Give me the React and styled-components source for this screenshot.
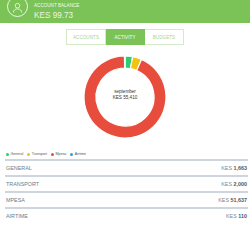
import React from "react";
import styled, { createGlobalStyle } from "styled-components";

const GlobalStyle = createGlobalStyle`
  html, body {
    margin: 0;
    padding: 0;
    background: #fff;
    font-family: "Liberation Sans", Arial, sans-serif;
  }
`;

const Page = styled.div`
  width: 250px;
  height: 250px;
  overflow: hidden;
  background: #fff;
`;

const Header = styled.div`
  height: 23px;
  background: #7bc257;
  display: flex;
  align-items: flex-start;
  padding-left: 7px;
  overflow: hidden;
`;

const Avatar = styled.div`
  width: 19px;
  height: 19px;
  border: 1px solid rgba(255, 255, 255, 0.85);
  border-radius: 50%;
  margin-top: -4px;
  display: flex;
  align-items: center;
  justify-content: center;
  svg {
    margin-top: 2px;
  }
`;

const Balance = styled.div`
  margin-left: 6px;
  display: flex;
  flex-direction: column;
  color: #fff;
`;

const BalanceLabel = styled.span`
  font-size: 4.6px;
  margin-top: 3px;
  color: #f3f9ef;
`;

const BalanceValue = styled.span`
  font-size: 8.2px;
  margin-top: 3px;
  color: #eaf5e4;
`;

const Tabs = styled.div`
  display: flex;
  justify-content: center;
  margin-top: 6px;
`;

const Tab = styled.div`
  width: 38px;
  height: 14px;
  display: flex;
  align-items: center;
  justify-content: center;
  font-size: 4.5px;
  letter-spacing: 0.1px;
  border: 1px solid ${(p) => (p.active ? "#7bc257" : "#d3ebc6")};
  background: ${(p) => (p.active ? "#7bc257" : "#fff")};
  color: ${(p) => (p.active ? "#fff" : "#a9d393")};
  & + & {
    border-left: none;
  }
`;

const ChartWrap = styled.div`
  position: relative;
  height: 95px;
  margin-top: 5px;
`;

const CenterLabel = styled.div`
  position: absolute;
  left: 0;
  right: 0;
  top: 39px;
  text-align: center;
  font-size: 4.6px;
  line-height: 5.5px;
  color: #333;
`;

const Legend = styled.div`
  display: flex;
  gap: 4px;
  padding-left: 6px;
  margin-top: 5px;
  height: 8px;
  align-items: center;
`;

const LegendItem = styled.div`
  display: flex;
  align-items: center;
  font-size: 3.6px;
  color: #555;
  gap: 1.5px;
`;

const Dot = styled.span`
  width: 3px;
  height: 3px;
  border-radius: 50%;
  background: ${(p) => p.color};
`;

const List = styled.div`
  padding: 0 2px 0 5px;
  margin-top: 1px;
`;

const Row = styled.div`
  height: 14px;
  border-top: 2px solid #cdd6df;
  display: flex;
  align-items: center;
  justify-content: space-between;
  font-size: 5.4px;
  color: #6a7b8c;
  padding: 0 1px 0 1px;
`;

const Amount = styled.span`
  color: #7a8896;
  b {
    color: #4a5a6b;
  }
`;

const data = [
  { name: "General", label: "GENERAL", value: 1663, color: "#2ecc71" },
  { name: "Transport", label: "TRANSPORT", value: 2000, color: "#f1c40f" },
  { name: "Mpesa", label: "MPESA", value: 51637, color: "#e74c3c" },
  { name: "Airtime", label: "AIRTIME", value: 110, color: "#3498db" },
];

const fmt = (n) => n.toLocaleString("en-US");

const arc = (cx, cy, r1, r2, a0, a1) => {
  const p = (r, a) => [cx + r * Math.sin(a), cy - r * Math.cos(a)];
  const large = a1 - a0 > Math.PI ? 1 : 0;
  const [x0, y0] = p(r2, a0);
  const [x1, y1] = p(r2, a1);
  const [x2, y2] = p(r1, a1);
  const [x3, y3] = p(r1, a0);
  return `M${x0} ${y0} A${r2} ${r2} 0 ${large} 1 ${x1} ${y1} L${x2} ${y2} A${r1} ${r1} 0 ${large} 0 ${x3} ${y3} Z`;
};

const Donut = () => {
  const total = data.reduce((s, d) => s + d.value, 0);
  let a = 0;
  return (
    <svg width="250" height="95" viewBox="0 0 250 95">
      {data.map((d) => {
        const a0 = a;
        a += (d.value / total) * Math.PI * 2;
        return (
          <path
            key={d.name}
            d={arc(125, 47, 29, 41, a0, a - 0.0001)}
            fill={d.color}
            stroke="#fff"
            strokeWidth="1.2"
          />
        );
      })}
    </svg>
  );
};

const UserIcon = () => (
  <svg width="11" height="11" viewBox="0 0 24 24" fill="none" stroke="#fff" strokeWidth="1.6">
    <circle cx="12" cy="8" r="5" />
    <path d="M3 23c0-5 4-8 9-8s9 3 9 8" />
  </svg>
);

export default function App() {
  return (
    <Page>
      <GlobalStyle />
      <Header>
        <Avatar>
          <UserIcon />
        </Avatar>
        <Balance>
          <BalanceLabel>ACCOUNT BALANCE</BalanceLabel>
          <BalanceValue>KES 99.73</BalanceValue>
        </Balance>
      </Header>
      <Tabs>
        <Tab>ACCOUNTS</Tab>
        <Tab active>ACTIVITY</Tab>
        <Tab>BUDGETS</Tab>
      </Tabs>
      <ChartWrap>
        <Donut />
        <CenterLabel>
          september
          <br />
          KES 55,410
        </CenterLabel>
      </ChartWrap>
      <Legend>
        {data.map((d) => (
          <LegendItem key={d.name}>
            <Dot color={d.color} />
            {d.name}
          </LegendItem>
        ))}
      </Legend>
      <List>
        {data.map((d) => (
          <Row key={d.name}>
            <span>{d.label}</span>
            <Amount>
              KES <b>{fmt(d.value)}</b>
            </Amount>
          </Row>
        ))}
      </List>
    </Page>
  );
}
